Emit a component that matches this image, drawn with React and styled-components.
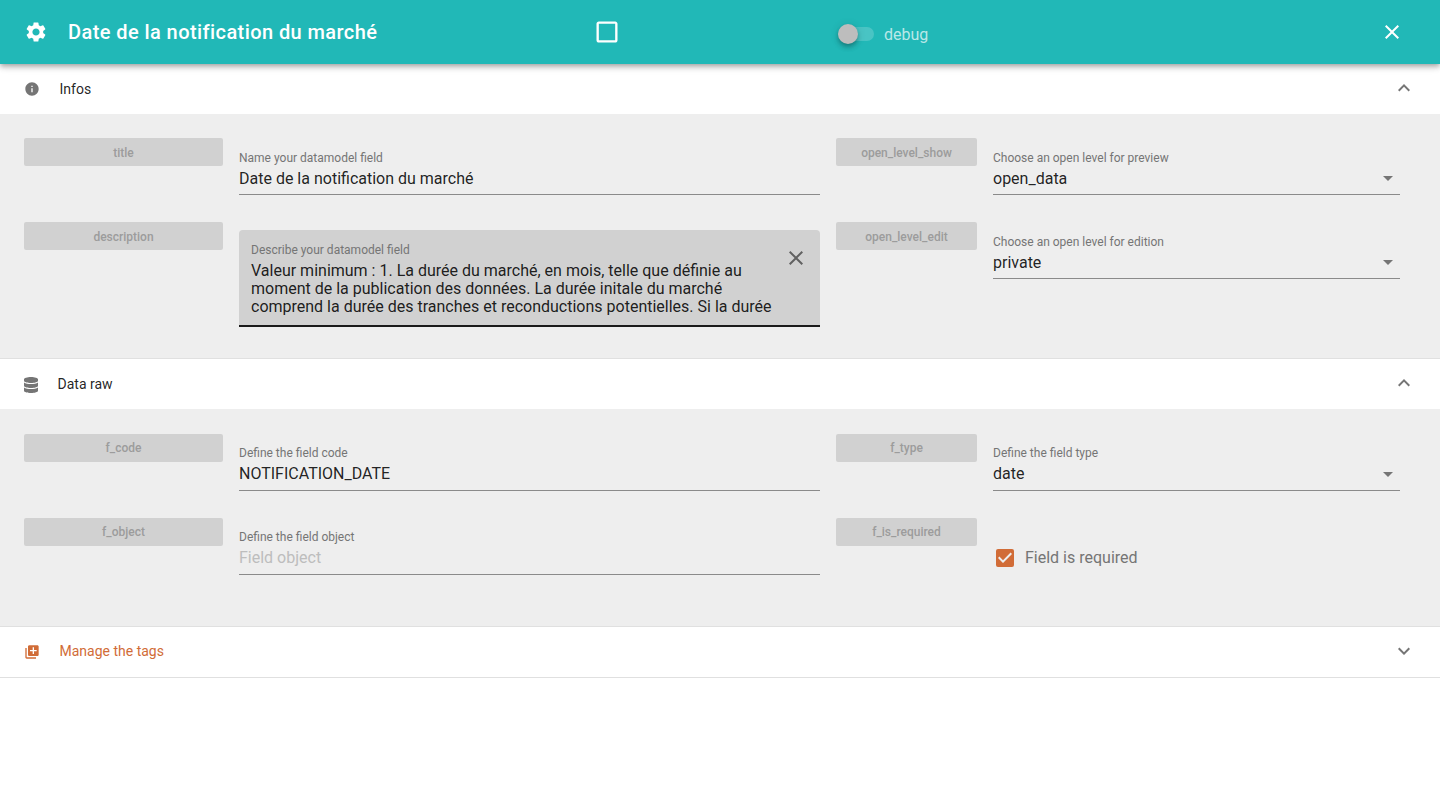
import React from "react";
import styled, { createGlobalStyle, css } from "styled-components";
import {
  MdSettings,
  MdClose,
  MdInfo,
  MdLibraryAdd,
  MdExpandLess,
  MdExpandMore,
  MdCheckBoxOutlineBlank,
  MdCheckBox,
  MdArrowDropDown,
} from "react-icons/md";
import { FaDatabase } from "react-icons/fa";

const GlobalStyle = createGlobalStyle`
  *, *::before, *::after { box-sizing: border-box; }
  body {
    margin: 0;
    background: #fff;
    color: rgba(0, 0, 0, 0.87);
    font-family: Roboto, "Liberation Sans", sans-serif;
    font-size: 16px;
    line-height: 1.5;
    overflow: hidden;
  }
  svg { display: block; flex: none; }
`;

const Page = styled.main`
  min-height: 787px;
  background: #fff;
`;

const Toolbar = styled.header`
  position: relative;
  z-index: 1;
  display: grid;
  grid-template-columns: 569px 243.5px 1fr 28px;
  align-items: center;
  height: 64px;
  padding: 0 32px 0 24px;
  background: #21b8b7;
  color: #fff;
  box-shadow: 0 2px 4px -1px rgba(0, 0, 0, 0.2), 0 4px 5px rgba(0, 0, 0, 0.14),
    0 1px 10px rgba(0, 0, 0, 0.12);
`;

const Heading = styled.div`
  display: flex;
  align-items: center;
  gap: 20px;
`;

const Title = styled.h1`
  margin: 0;
  font-size: 20px;
  font-weight: 500;
  line-height: 28px;
  letter-spacing: 0.42px;
`;

const Switch = styled.div`
  display: flex;
  align-items: center;
  gap: 10px;
  padding: 4px 0 0 1.5px;
  line-height: 20px;
  color: rgba(255, 255, 255, 0.7);
`;

const SwitchLabel = styled.span`
  padding-top: 2px;
`;

const Track = styled.span`
  display: flex;
  align-items: center;
  width: 36px;
  height: 14px;
  border-radius: 8px;
  background: rgba(255, 255, 255, 0.18);
`;

const Thumb = styled.span`
  width: 20px;
  height: 20px;
  flex: none;
  border-radius: 50%;
  background: #bdbdbd;
  box-shadow: 0 2px 4px -1px rgba(0, 0, 0, 0.2), 0 4px 5px rgba(0, 0, 0, 0.14),
    0 1px 10px rgba(0, 0, 0, 0.12);
`;

const Panel = styled.section`
  border-bottom: 1px solid #e0e0e0;
`;

const PanelHeader = styled.div`
  display: flex;
  align-items: center;
  height: 50px;
  padding: 0 24px;
  font-size: 14px;
  line-height: 20px;
  color: ${(p) => (p.$accent ? "#d16c37" : "rgba(0, 0, 0, 0.87)")};
  > svg:first-child {
    color: ${(p) => (p.$accent ? "#d16c37" : "#757575")};
  }
`;

const PanelTitle = styled.span`
  flex: 1;
  margin-left: 19.5px;
  padding-bottom: ${(p) => (p.$accent ? 2 : 0)}px;
`;

const DatabaseIcon = styled(FaDatabase)`
  width: 14px;
  height: 16px;
  margin-top: 2px;
`;

const Chevron = styled.span`
  color: #757575;
  margin-bottom: 2px;
`;

const Tag = styled.div`
  height: 28px;
  border-radius: 2px;
  background: #d1d1d1;
  color: #9c9c9c;
  font-size: 12px;
  font-weight: 500;
  line-height: 30px;
  text-align: center;
`;

const Label = styled.span`
  font-size: 12px;
  line-height: 16px;
  color: #757575;
`;

const Field = styled.div`
  display: flex;
  flex-direction: column;
  align-self: start;
  height: 57px;
  padding-top: 12px;
  border-bottom: 1px solid #8a8a8a;
  ${(p) =>
    p.$filled &&
    css`
      position: relative;
      height: 97px;
      margin-top: 8px;
      padding: 12px 40px 0 12px;
      border-bottom: 2px solid #1a1a1a;
      border-radius: 4px 4px 0 0;
      background: #d1d1d1;
    `}
`;

const ValueRow = styled.div`
  display: flex;
  align-items: center;
  justify-content: space-between;
  height: 24px;
  color: ${(p) => (p.$placeholder ? "#bdbdbd" : "rgba(0, 0, 0, 0.87)")};
  > svg {
    color: #757575;
  }
`;

const Value = styled.span`
  padding-top: 2px;
`;

const PanelBody = styled.div`
  display: grid;
  grid-template-columns: 199px 581px 141px 407px;
  grid-auto-rows: 84px;
  column-gap: 16px;
  height: ${(p) => p.$height}px;
  padding: 24px 40px 0 24px;
  background: #eee;
  ${(p) =>
    p.$tight &&
    css`
      padding-top: 25px;
      ${Tag} {
        line-height: 28px;
      }
      ${Field} {
        padding-top: 11px;
      }
      ${Label} {
        margin-bottom: 1px;
      }
      ${Value} {
        padding-top: 0;
      }
    `}
`;

const TextArea = styled.p`
  margin: 4px 0 0;
  line-height: 18px;
  white-space: pre;
`;

const ClearButton = styled.span`
  position: absolute;
  top: 16px;
  right: 12px;
  color: #616161;
`;

const CheckField = styled.div`
  display: flex;
  align-items: center;
  align-self: start;
  gap: 8px;
  margin-top: 28px;
  height: 24px;
  color: #757575;
  > svg {
    color: #d16c37;
  }
`;

function TextField({ label, value, placeholder, select }) {
  return (
    <Field>
      <Label>{label}</Label>
      <ValueRow $placeholder={!value}>
        <Value>{value || placeholder}</Value>
        {select && <MdArrowDropDown size={24} />}
      </ValueRow>
    </Field>
  );
}

function SectionHeader({ icon, title, open, accent }) {
  return (
    <PanelHeader $accent={accent}>
      {icon}
      <PanelTitle $accent={accent}>{title}</PanelTitle>
      <Chevron>{open ? <MdExpandLess size={24} /> : <MdExpandMore size={24} />}</Chevron>
    </PanelHeader>
  );
}

const description = [
  "Valeur minimum : 1. La durée du marché, en mois, telle que définie au",
  "moment de la publication des données. La durée initale du marché",
  "comprend la durée des tranches et reconductions potentielles. Si la durée",
].join("\n");

export default function App() {
  return (
    <Page>
      <GlobalStyle />
      <Toolbar>
        <Heading>
          <MdSettings size={24} />
          <Title>Date de la notification du marché</Title>
        </Heading>
        <MdCheckBoxOutlineBlank size={28} />
        <Switch>
          <Track>
            <Thumb />
          </Track>
          <SwitchLabel>debug</SwitchLabel>
        </Switch>
        <MdClose size={24} />
      </Toolbar>

      <Panel>
        <SectionHeader icon={<MdInfo size={16} />} title="Infos" open />
        <PanelBody $height={244}>
          <Tag>title</Tag>
          <TextField label="Name your datamodel field" value="Date de la notification du marché" />
          <Tag>open_level_show</Tag>
          <TextField label="Choose an open level for preview" value="open_data" select />
          <Tag>description</Tag>
          <Field $filled>
            <Label>Describe your datamodel field</Label>
            <TextArea>{description}</TextArea>
            <ClearButton>
              <MdClose size={24} />
            </ClearButton>
          </Field>
          <Tag>open_level_edit</Tag>
          <TextField label="Choose an open level for edition" value="private" select />
        </PanelBody>
      </Panel>

      <Panel>
        <SectionHeader icon={<DatabaseIcon />} title="Data raw" open />
        <PanelBody $height={217} $tight>
          <Tag>f_code</Tag>
          <TextField label="Define the field code" value="NOTIFICATION_DATE" />
          <Tag>f_type</Tag>
          <TextField label="Define the field type" value="date" select />
          <Tag>f_object</Tag>
          <TextField label="Define the field object" placeholder="Field object" />
          <Tag>f_is_required</Tag>
          <CheckField>
            <MdCheckBox size={24} />
            Field is required
          </CheckField>
        </PanelBody>
      </Panel>

      <Panel>
        <SectionHeader icon={<MdLibraryAdd size={16} />} title="Manage the tags" accent />
      </Panel>
    </Page>
  );
}
